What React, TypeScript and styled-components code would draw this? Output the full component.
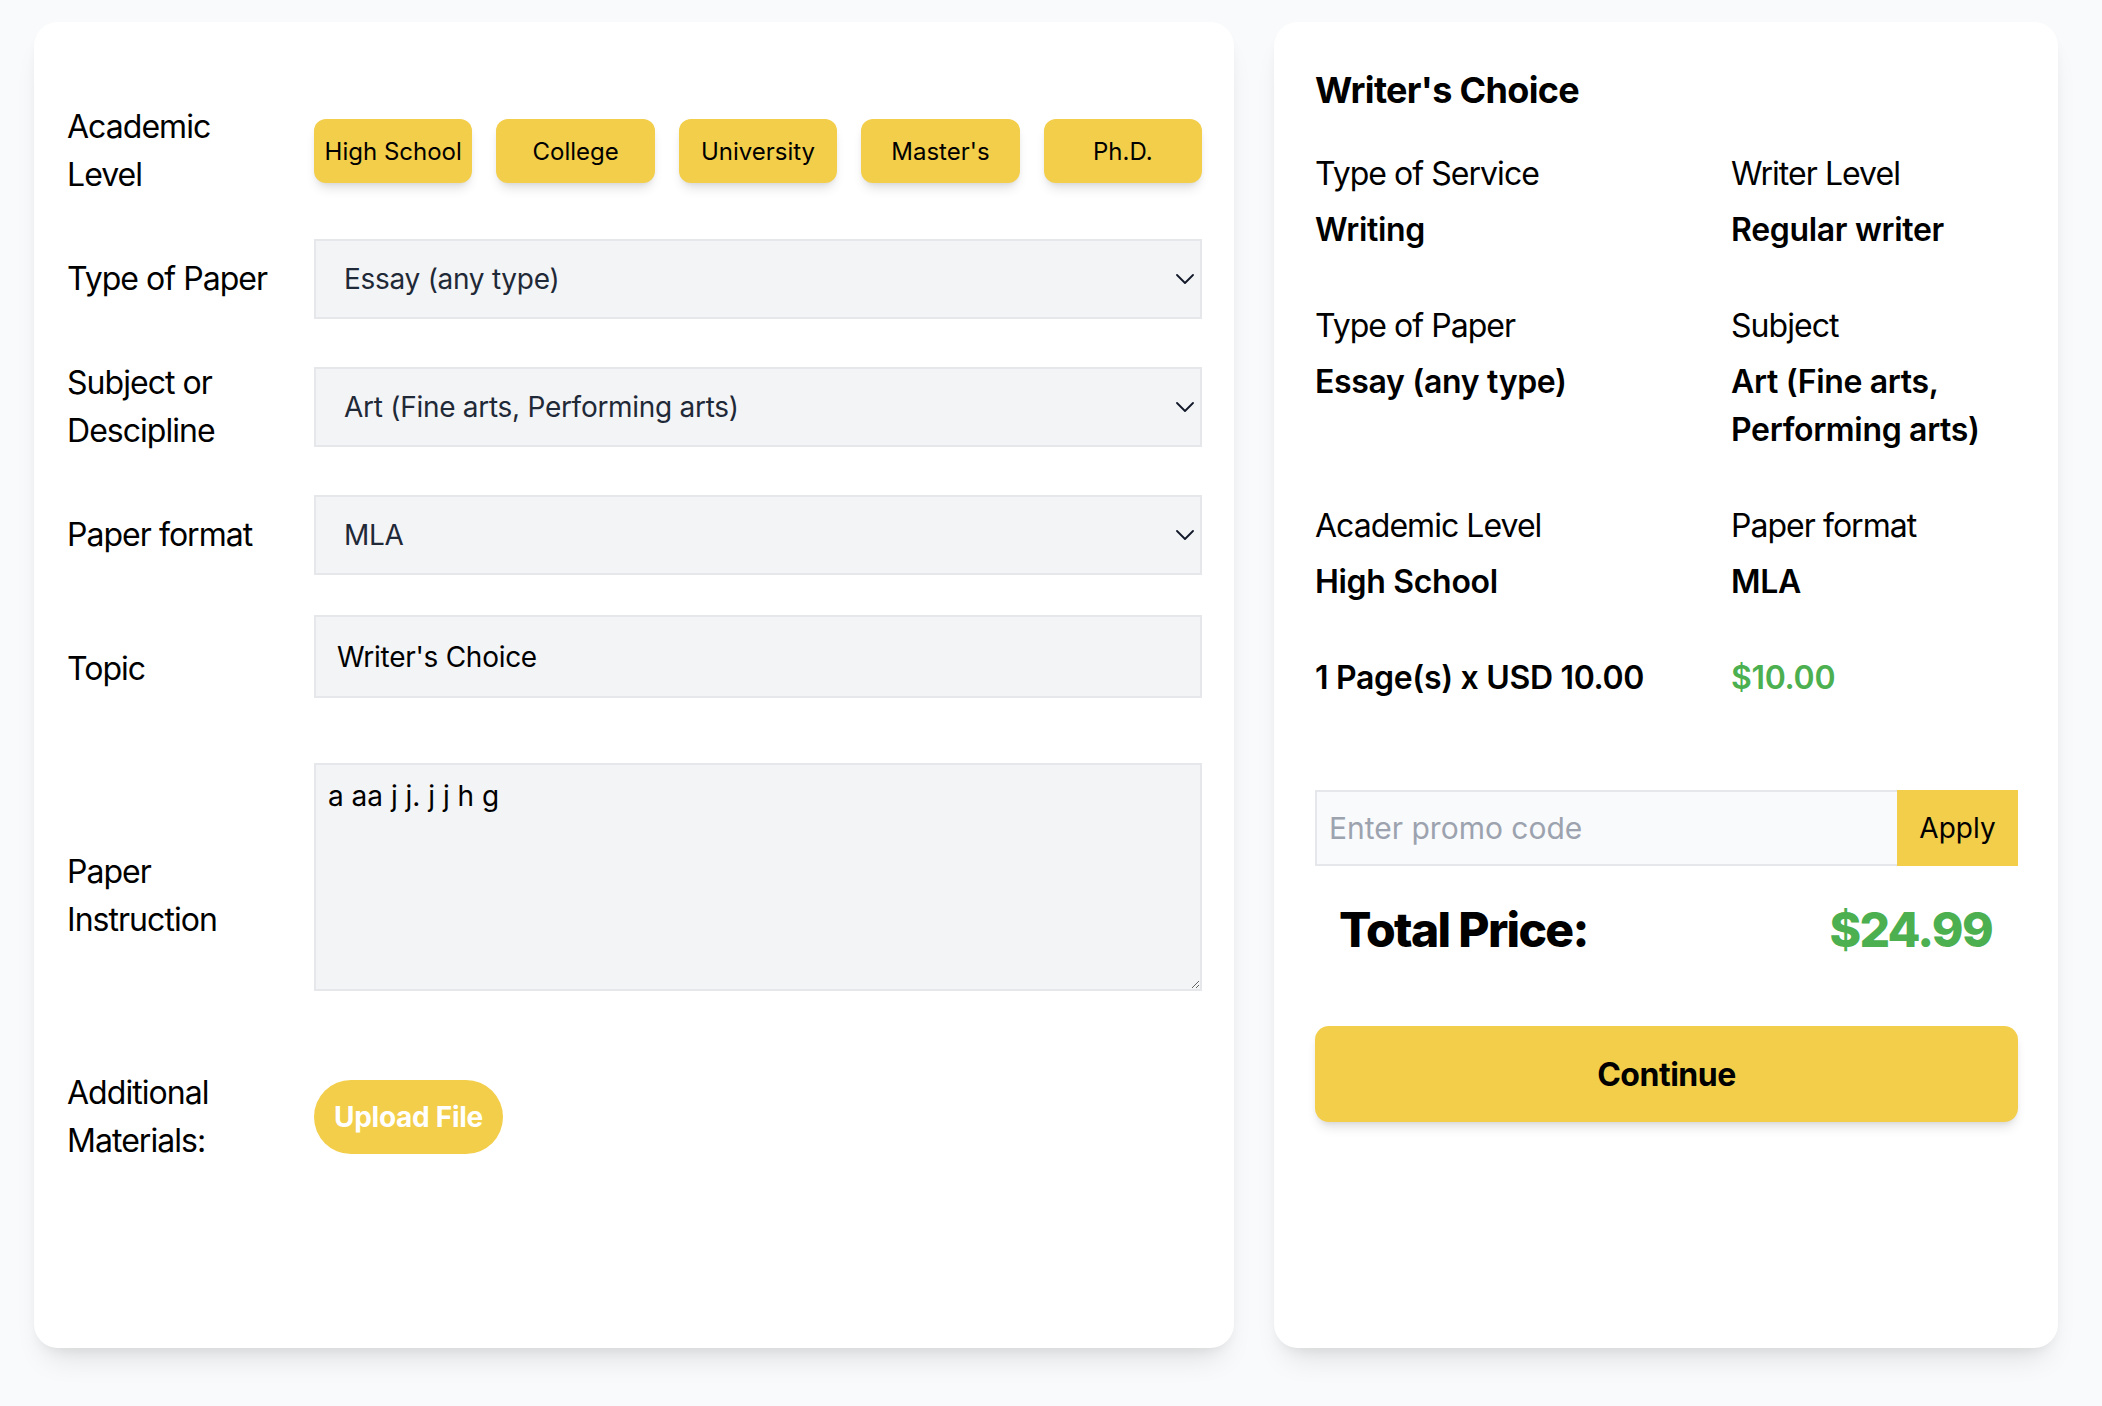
import React from 'react';
import styled, { createGlobalStyle } from 'styled-components';

const GlobalStyle = createGlobalStyle`
  html, body { margin: 0; padding: 0; background: #f9fafb; }
  body {
    font-family: Inter, "Helvetica Neue", "Liberation Sans", Arial, sans-serif;
    color: #000;
  }
  *, *::before, *::after { box-sizing: border-box; }
`;

const YELLOW = '#f3ce4a';
const GREEN = '#4caf50';

const Page = styled.div`
  display: grid;
  grid-template-columns: 1200px 784px;
  column-gap: 40px;
  padding: 22px 0 58px 34px;
`;

const Card = styled.section<{ $pad: string }>`
  background: #fff;
  border-radius: 24px;
  height: 1326px;
  padding: ${(p) => p.$pad};
  box-shadow: 0 20px 30px -12px rgba(0, 0, 0, 0.12), 0 6px 14px -6px rgba(0, 0, 0, 0.08);
`;

/* ---------- left form ---------- */

const Form = styled.form`
  display: flex;
  flex-direction: column;
  gap: 40px;
`;

const Row = styled.div`
  display: grid;
  grid-template-columns: 247px 1fr;
  align-items: center;
`;

const Label = styled.label`
  font-size: 32px;
  line-height: 48px;
  letter-spacing: -0.03em;
  color: #000;
`;

const Control = styled.div<{ $below?: number }>`
  position: relative;
  padding-bottom: ${(p) => p.$below ?? 0}px;
`;

const LevelGroup = styled.div`
  display: flex;
  gap: 24px;
`;

const LevelButton = styled.button`
  flex: 1;
  height: 64px;
  border: none;
  border-radius: 12px;
  background: ${YELLOW};
  color: #000;
  font-family: inherit;
  font-size: 24px;
  box-shadow: 0 8px 12px -3px rgba(0, 0, 0, 0.12), 0 3px 6px -3px rgba(0, 0, 0, 0.1);
  cursor: pointer;
`;

const Select = styled.select`
  appearance: none;
  -webkit-appearance: none;
  display: block;
  width: 100%;
  height: 80px;
  padding: 0 60px 0 28px;
  background: #f3f4f6;
  border: 2px solid #e5e7eb;
  border-radius: 0;
  font-family: inherit;
  font-size: 28px;
  letter-spacing: -0.01em;
  color: #1f2937;
  outline: none;
`;

const Chevron = styled.svg`
  position: absolute;
  right: 8px;
  top: 50%;
  width: 18px;
  height: 10px;
  margin-top: -5px;
  pointer-events: none;
`;

const TextInput = styled.input`
  display: block;
  width: 100%;
  height: 83px;
  padding: 0 21px;
  background: #f3f4f6;
  border: 2px solid #e5e7eb;
  font-family: inherit;
  font-size: 28px;
  letter-spacing: -0.01em;
  color: #000;
  outline: none;
`;

const TextArea = styled.textarea`
  display: block;
  width: 100%;
  height: 228px;
  padding: 10px 12px;
  background: #f3f4f6;
  border: 2px solid #e5e7eb;
  font-family: inherit;
  font-size: 28px;
  line-height: 42px;
  color: #000;
  outline: none;
`;

const UploadButton = styled.button`
  height: 74px;
  padding: 0 20px;
  border: none;
  border-radius: 999px;
  background: ${YELLOW};
  color: #fff;
  font-family: inherit;
  font-size: 28px;
  font-weight: 700;
  letter-spacing: -0.01em;
  cursor: pointer;
`;

/* ---------- right summary ---------- */

const Title = styled.h2`
  margin: 0 0 32px;
  font-size: 36px;
  line-height: 56px;
  font-weight: 700;
  letter-spacing: -0.018em;
`;

const InfoGrid = styled.div`
  display: grid;
  grid-template-columns: 416px 1fr;
  row-gap: 48px;
`;

const InfoItem = styled.div`
  display: flex;
  flex-direction: column;
  gap: 8px;
`;

const InfoLabel = styled.span`
  font-size: 32px;
  line-height: 48px;
  letter-spacing: -0.03em;
`;

const InfoValue = styled.span<{ $green?: boolean }>`
  font-size: 32px;
  line-height: 48px;
  font-weight: 600;
  letter-spacing: -0.01em;
  color: ${(p) => (p.$green ? GREEN : '#000')};
`;

const PromoRow = styled.div`
  display: flex;
  height: 76px;
  margin-top: 88px;
`;

const PromoInput = styled.input`
  flex: 1;
  min-width: 0;
  padding: 0 12px;
  background: #f9fafb;
  border: 2px solid #e5e7eb;
  border-right: none;
  font-family: inherit;
  font-size: 30px;
  color: #000;
  outline: none;
  &::placeholder { color: #9ca3af; }
`;

const ApplyButton = styled.button`
  width: 121px;
  border: none;
  background: ${YELLOW};
  font-family: inherit;
  font-size: 28px;
  color: #000;
  cursor: pointer;
`;

const TotalRow = styled.div`
  display: flex;
  justify-content: space-between;
  align-items: center;
  margin-top: 32px;
  padding: 0 26px 0 24px;
  font-size: 48px;
  line-height: 64px;
  font-weight: 800;
  letter-spacing: -0.035em;
`;

const TotalAmount = styled.span`
  color: ${GREEN};
`;

const ContinueButton = styled.button`
  display: block;
  width: 100%;
  height: 96px;
  margin-top: 64px;
  border: none;
  border-radius: 14px;
  background: ${YELLOW};
  font-family: inherit;
  font-size: 32px;
  font-weight: 700;
  letter-spacing: -0.015em;
  color: #000;
  box-shadow: 0 8px 12px -3px rgba(0, 0, 0, 0.12), 0 3px 6px -3px rgba(0, 0, 0, 0.1);
  cursor: pointer;
`;

const ChevronIcon = () => (
  <Chevron viewBox="0 0 18 10" fill="none">
    <path d="M1 1 L9 9 L17 1" stroke="#111827" strokeWidth="1.8" strokeLinecap="round" strokeLinejoin="round" />
  </Chevron>
);

const SelectField = ({ value, options }: { value: string; options: string[] }) => (
  <Control>
    <Select defaultValue={value}>
      {options.map((o) => (
        <option key={o}>{o}</option>
      ))}
    </Select>
    <ChevronIcon />
  </Control>
);

const levels = ['High School', 'College', 'University', "Master's", 'Ph.D.'];

export default function App() {
  return (
    <>
      <GlobalStyle />
      <Page>
        <Card $pad="81px 32px 0 33px">
          <Form onSubmit={(e) => e.preventDefault()}>
            <Row>
              <Label>
                Academic
                <br />
                Level
              </Label>
              <LevelGroup>
                {levels.map((l) => (
                  <LevelButton type="button" key={l}>
                    {l}
                  </LevelButton>
                ))}
              </LevelGroup>
            </Row>
            <Row>
              <Label>Type of Paper</Label>
              <SelectField value="Essay (any type)" options={['Essay (any type)', 'Research paper', 'Term paper']} />
            </Row>
            <Row>
              <Label>
                Subject or
                <br />
                Descipline
              </Label>
              <SelectField
                value="Art (Fine arts, Performing arts)"
                options={['Art (Fine arts, Performing arts)', 'Biology', 'History']}
              />
            </Row>
            <Row>
              <Label>Paper format</Label>
              <SelectField value="MLA" options={['MLA', 'APA', 'Chicago']} />
            </Row>
            <Row>
              <Label>Topic</Label>
              <Control $below={25}>
                <TextInput defaultValue="Writer's Choice" />
              </Control>
            </Row>
            <Row>
              <Label>
                Paper
                <br />
                Instruction
              </Label>
              <Control $below={38}>
                <TextArea defaultValue="a aa j j. j j h g" />
              </Control>
            </Row>
            <Row>
              <Label>
                Additional
                <br />
                Materials:
              </Label>
              <div>
                <UploadButton type="button">Upload File</UploadButton>
              </div>
            </Row>
          </Form>
        </Card>

        <Card $pad="40px 40px 0 41px">
          <Title>Writer's Choice</Title>
          <InfoGrid>
            <InfoItem>
              <InfoLabel>Type of Service</InfoLabel>
              <InfoValue>Writing</InfoValue>
            </InfoItem>
            <InfoItem>
              <InfoLabel>Writer Level</InfoLabel>
              <InfoValue>Regular writer</InfoValue>
            </InfoItem>
            <InfoItem>
              <InfoLabel>Type of Paper</InfoLabel>
              <InfoValue>Essay (any type)</InfoValue>
            </InfoItem>
            <InfoItem>
              <InfoLabel>Subject</InfoLabel>
              <InfoValue>
                Art (Fine arts,
                <br />
                Performing arts)
              </InfoValue>
            </InfoItem>
            <InfoItem>
              <InfoLabel>Academic Level</InfoLabel>
              <InfoValue>High School</InfoValue>
            </InfoItem>
            <InfoItem>
              <InfoLabel>Paper format</InfoLabel>
              <InfoValue>MLA</InfoValue>
            </InfoItem>
            <InfoValue>1 Page(s) x USD 10.00</InfoValue>
            <InfoValue $green>$10.00</InfoValue>
          </InfoGrid>

          <PromoRow>
            <PromoInput placeholder="Enter promo code" />
            <ApplyButton type="button">Apply</ApplyButton>
          </PromoRow>

          <TotalRow>
            <span>Total Price:</span>
            <TotalAmount>$24.99</TotalAmount>
          </TotalRow>

          <ContinueButton type="button">Continue</ContinueButton>
        </Card>
      </Page>
    </>
  );
}
